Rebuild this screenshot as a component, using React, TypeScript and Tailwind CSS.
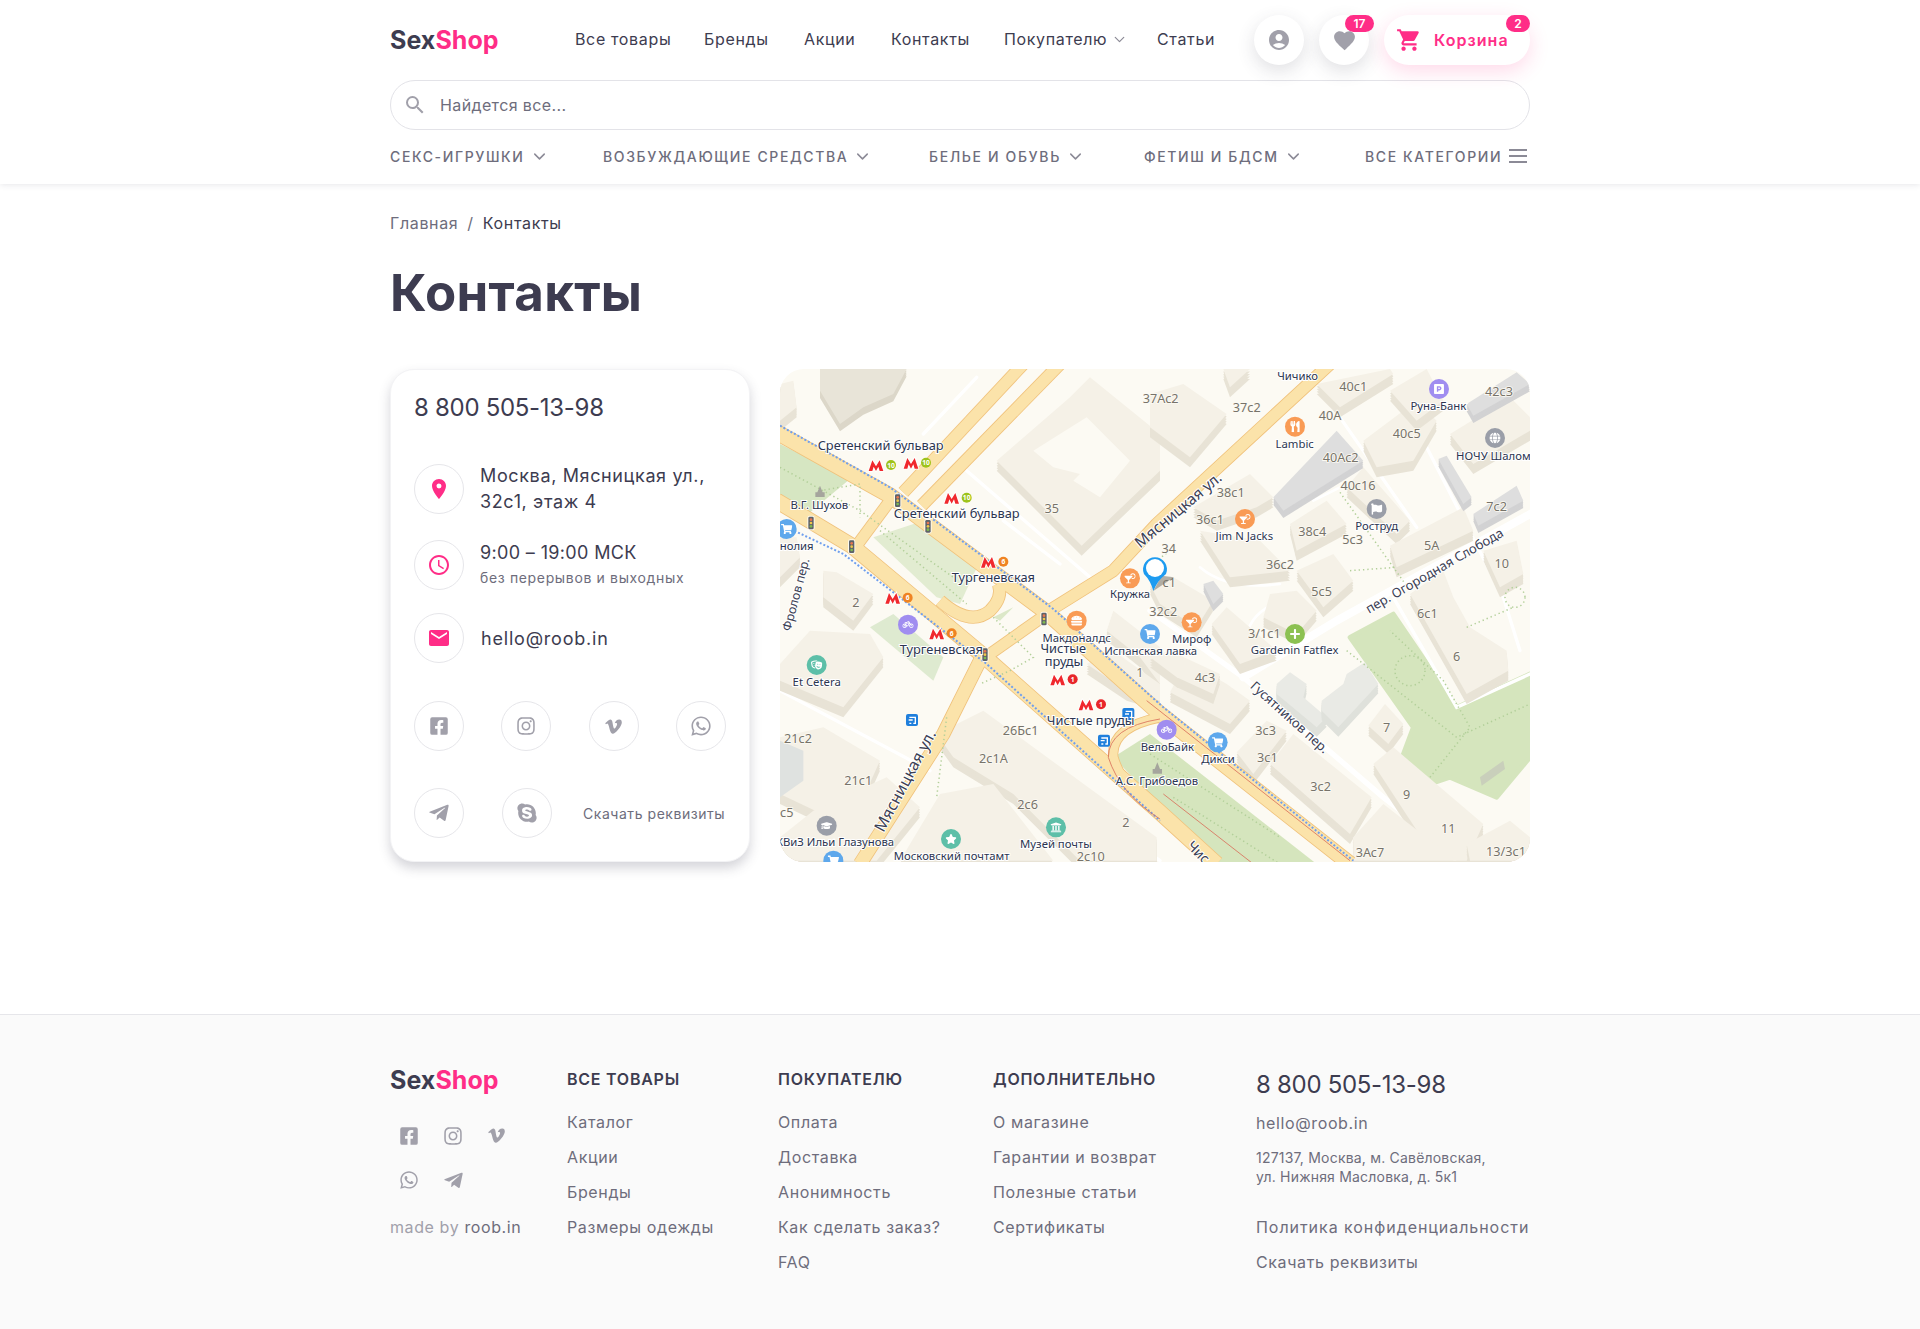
import React from 'react';
import { ChevronDown } from 'lucide-react';
import { MdAccountCircle, MdFavorite, MdShoppingCart, MdSearch, MdPlace, MdAccessTime, MdMail } from 'react-icons/md';
import {
  FaFacebookSquare, FaInstagram, FaVimeoV, FaWhatsapp, FaTelegramPlane, FaSkype,
  FaShoppingCart, FaBicycle, FaTheaterMasks, FaHamburger, FaCocktail, FaGraduationCap, FaStar, FaUniversity, FaUtensils, FaFlag, FaPlus, FaParking, FaGlobe,
} from 'react-icons/fa';

type P = number[];
const pts = (a: P) => { const o: string[] = []; for (let i = 0; i < a.length; i += 2) o.push(a[i] + ',' + a[i + 1]); return o.join(' '); };

function B({ p, h = 30, top = '#f5f1e7', side = '#e8e3d6' }: { p: P; h?: number; top?: string; side?: string }) {
  const steps = [h, h * 0.75, h * 0.5, h * 0.25];
  return (
    <g>
      {steps.map((s) => <polygon key={s} points={pts(p)} fill={side} transform={`translate(0 ${s})`} />)}
      <polygon points={pts(p)} fill={top} />
    </g>
  );
}

const b4: P[] = [
  [650,290,870,100,930,40,1140,210,1140,320,905,545],
  [0,60,40,50,50,130,0,170],
  [130,620,170,625,280,690,220,770,130,700],
  [0,900,90,800,270,810,310,880,190,1030,0,950],
  [0,1120,130,1090,300,1190,210,1390,0,1290],
  [100,1340,320,1240,420,1330,290,1490,0,1490,0,1420],
  [470,1110,610,1040,1130,1420,1130,1490,900,1490,700,1290,520,1180],
  [360,1490,480,1290,640,1260,820,1490],
  [1000,740,1140,850,1140,960,1080,880,980,800],
  [0,520,50,520,60,580,0,640],
  [920,900,1000,860,1140,960,1140,1010,1040,980],
];
const b4top: P[] = [
  [120,15,380,15,340,90,250,130,180,180,120,80],
];
const b5: P[] = [
  [220,15,300,15,240,70],
  [0,90,100,60,230,150,120,280,0,190],
  [500,60,720,15,730,30,570,130],
  [640,230,800,110,860,170,790,290,680,310],
  [720,80,830,15,880,110,800,170],
  [900,210,1080,100,1140,160,1140,200,970,300],
  [590,370,640,310,780,470,740,510],
  [130,430,300,330,370,400,320,430,200,470],
  [150,500,330,530,420,620,240,640],
  [420,480,530,410,590,480,440,560],
  [720,545,940,430,970,500,740,610],
  [1000,560,1100,530,1120,630,1050,670],
  [440,620,550,570,610,650,520,730],
  [360,690,440,680,500,740,440,810,340,760],
  [780,690,880,620,910,700,960,790,1070,860,1075,920,950,990],
  [655,1085,705,1020,760,1080,715,1140],
  [185,780,230,730,380,860,270,900],
  [260,1165,350,1070,410,1100,310,1230],
  [360,1200,430,1110,665,1300,600,1410],
  [670,1200,730,1150,1000,1380,950,1490,860,1490],
  [610,1420,700,1320,920,1490,610,1490],
  [60,985,110,890,230,960,300,1010,240,1080],
  [950,1440,1080,1370,1140,1420,1140,1490,960,1490],
  [0,880,60,860,210,930,190,990,80,940],
  [0,660,70,640,190,710,140,790,30,720],
];
const grey5: P[] = [
  [370,400,560,200,640,290,400,440],
  [950,120,1100,25,1140,60,970,155],
  [970,450,1100,365,1120,410,985,485],
  [865,285,890,275,965,400,940,420],
  [160,660,190,650,220,690,190,720],
];
const pale5: P[] = [
  [380,960,420,925,470,960,460,1000,530,1060,500,1090,380,990],
  [515,1010,580,960,590,930,645,895,685,960,565,1090,515,1040],
];

const stations: [string, number, number][] = [
  ['Сретенский бульвар',302,258],['Сретенский бульвар',530,462],['Тургеневская',640,653],['Тургеневская',484,870],
  ['Чистые',850,868],['пруды',852,905],['Чистые пруды',932,1082],
];
const names4: [string, number, number][] = [
  ['В.Г. Шухов',118,436],['нолия',50,558],['Макдоналдс',890,833],
  ['Испанская лавка',1112,873],['Кружка',1050,703],['Et Cetera',110,965],['КВиЗ Ильи Глазунова',165,1445],
  ['Московский почтамт',515,1488],['Музей почты',828,1452],['ВелоБайк',1162,1160],['А.С. Грибоедов',1131,1262],
];
const nums4: [string, number, number][] = [
  ['2',228,730],['35',815,448],['21с2',54,1136],['21с1',235,1262],['26Бс1',722,1112],['2с1А',640,1198],['2с6',743,1334],
  ['2',1038,1388],['1',1080,940],['с5',20,1358],['2с10',932,1492],['37Ас2',1142,118],
];
const names5: [string, number, number][] = [
  ['Чичико',443,47],['Lambic',434,251],['Руна-Банк',865,137],['НОЧУ Шалом',1030,287],['Jim N Jacks',283,528],['Роструд',680,497],
  ['Мироф',125,838],['Gardenin Fatflex',434,870],['Дикси',204,1197],
];
const nums5: [string, number, number][] = [
  ['40с1',610,80],['40А',540,167],['37с2',290,143],['42с3',1047,95],['40с5',770,222],['40Ас2',572,293],['40с16',624,378],['38с1',242,398],
  ['36с1',180,480],['38с4',487,515],['5с3',608,539],['34',56,566],['7с2',1040,440],['5А',845,557],['10',1055,611],['36с2',390,614],['5с5',515,695],
  ['6с1',832,762],['32с2',40,755],['с1',58,668],['3/1с1',343,822],['6',920,890],['4с3',165,953],['7',710,1103],['3с3',347,1113],['3с1',352,1195],
  ['3с2',512,1282],['9',770,1305],['11',895,1407],['3Ас7',660,1480],['13/3с1',1068,1476],
];
const rot: [string, number, number, number, number][] = [
  ['Мясницкая ул.',390,1258,-62,48],
  ['Мясницкая ул.',1205,450,-40,46],
  ['Фролов пер.',60,695,-75,37],
  ['Гусятников пер.',1520,1070,42,39],
  ['пер. Огородная Слобода',1970,632,-30,39],
  ['Чис',1245,1475,45,42],
];

const orange = '#f99b55', blue = '#5ea8ec', purple = '#a08df0', teal = '#5dbfa8', grey = '#9a9ea8', green = '#8cc152';
const pois: [number, number, string, any][] = [
  [20,495,blue,FaShoppingCart],[384,782,purple,FaBicycle],[110,903,teal,FaTheaterMasks],[890,770,orange,FaHamburger],[1050,643,orange,FaCocktail],
  [1110,810,blue,FaShoppingCart],[140,1385,grey,FaGraduationCap],[513,1425,teal,FaStar],[828,1390,teal,FaUniversity],[160,1490,blue,FaShoppingCart],
  [1545,188,orange,FaUtensils],[1977,75,purple,FaParking],[2145,222,grey,FaGlobe],[1790,435,grey,FaFlag],[1395,465,orange,FaCocktail],
  [1235,775,orange,FaCocktail],[1545,810,green,FaPlus],[1160,1097,purple,FaBicycle],[1313,1135,blue,FaShoppingCart],
];
const metro: [number, number, number][] = [[288,305,10],[393,298,10],[515,403,10],[625,595,6],[338,703,6],[470,810,6],[833,948,1],[918,1023,1]];
const lights: [number, number][] = [[353,410],[93,477],[215,548],[444,487],[792,765],[615,872]];
const transit: [number, number][] = [[396,1068],[972,1130],[1045,1050]];

const yellow: [string, number][] = [
  ['M-10,205 L330,395 L800,745 L1140,1050 L1710,1500', 44],
  ['M-10,410 L215,545 L610,875 L1140,1345 L1310,1500', 44],
  ['M730,0 L370,385', 34],
  ['M840,0 L425,425', 34],
  ['M330,410 L230,545', 32],
  ['M800,750 L630,870', 32],
  ['M600,890 L490,1110 L240,1500', 38],
  ['M800,745 L1000,620 L1130,480 L1650,0', 34],
  ['M480,710 Q570,790 630,740 Q670,700 655,660', 34],
  ['M1140,1060 Q990,1090 1000,1180 Q1030,1280 1140,1350', 26],
];

function MapView() {
  return (
    <svg width="750" height="493" viewBox="0 0 750 493" className="block" fontFamily="'Noto Sans',sans-serif">
      <rect width="750" height="493" fill="#fcfaf3" />
      <g transform="translate(0 -5) scale(0.33333)">
        <polygon points="0,240 210,345 60,470 0,420" fill="#d6e6c2" />
        <polygon points="280,520 430,470 600,590 540,720 470,700" fill="#e2ecd1" />
        <polygon points="270,790 340,750 490,880 460,950" fill="#deead0" />
        <polygon points="1000,1180 1110,1110 1610,1500 1310,1500" fill="#d5e5bd" />
        <polygon points="640,760 700,730 660,770" fill="#dce8c8" />
        <polygon points="1710,820 1840,750 2030,1030 2250,930 2250,1180 2150,1300 2010,1240 1950,1260 1870,1170 1900,1090" fill="#d5e5bd" stroke="#d5e5bd" strokeWidth="14" strokeLinejoin="round" />
        <polygon points="2100,1240 2170,1190 2175,1215 2105,1265" fill="#c9cfbb" />
        <g fill="none" stroke="#ffffff" strokeLinecap="round">
          <path d="M1110,740 L1390,940 L1810,1300 L2070,1500" strokeWidth="16" />
          <path d="M1390,940 L1670,770 L2260,445" strokeWidth="24" />
          <path d="M1680,160 L1910,490 M1940,250 L2170,700 L2220,860 M1840,700 L2030,1030 L2250,930" strokeWidth="10" />
          <path d="M0,980 L450,1220 M560,320 L930,640 M430,210 L590,40 M700,1180 L1140,1490 M30,80 L0,180 M670,470 L840,600" strokeWidth="10" />
          <path d="M1260,610 Q1340,680 1500,660 M1400,830 Q1400,760 1480,720 M1600,410 L1680,370" strokeWidth="8" />
        </g>
        {b4top.map((p, i) => <B key={i} p={p} h={22} top="#e8e4d8" side="#dcd7c9" />)}
        {b4.map((p, i) => <B key={i} p={p} />)}
        <polygon points="760,260 920,160 1050,290 960,400 880,350 900,330 820,310" fill="#fcfaf3" />
        <g transform="translate(1110 0)">
          {b5.map((p, i) => <B key={i} p={p} />)}
          {grey5.map((p, i) => <B key={i} p={p} h={22} top="#dedede" side="#d2d2d3" />)}
          {pale5.map((p, i) => <B key={i} p={p} h={28} top="#e9eae5" side="#dfe1db" />)}
        </g>
        <polygon points="0,1130 0,1300 70,1250 70,1160" fill="#dfe2e0" />
        {yellow.map(([d, w], i) => <path key={i} d={d} fill="none" stroke="#f0c27c" strokeWidth={w + 5} strokeLinejoin="round" />)}
        {yellow.map(([d, w], i) => <path key={i} d={d} fill="none" stroke="#fbe3aa" strokeWidth={w} strokeLinejoin="round" />)}
        <g fill="none" stroke="#b2cf99" strokeWidth="4.5" strokeDasharray="4 9">
          <path d="M0,310 L240,440 L520,640 M300,500 L560,720 M120,380 L240,360 L240,460 M1680,385 L1890,680 M1710,620 L1850,610 M1170,560 L1090,620 M1950,1240 L2070,1090 L1990,950 L1830,800 M1700,860 L2030,1120 L2250,1020 M2060,790 L2200,730" />
          <circle cx="1890" cy="920" r="45" />
          <circle cx="2205" cy="700" r="30" />
          <path d="M1180,1300 L1500,1500 M1110,1170 L1500,1420" />
          <path d="M640,760 L760,880 L690,920 L600,960 M500,1060 L470,1300" />
        </g>
        <g fill="none" stroke="#6f9fee" strokeWidth="6" strokeDasharray="6 6">
          <path d="M0,185 L330,370 L820,735 L1150,1030 L1720,1490" />
          <path d="M0,480 L190,570 L620,900 L1140,1370" />
        </g>
        <path d="M1140,1065 Q985,1090 985,1180 Q1020,1290 1140,1365 M1150,1290 L1420,1500 M1100,1010 L1710,1490" fill="none" stroke="#d9705c" strokeWidth="2.5" />
        {lights.map(([x, y], i) => (
          <g key={i}>
            <rect x={x - 11} y={y - 22} width="22" height="44" rx="7" fill="#fff" opacity=".8" />
            <rect x={x - 8} y={y - 19} width="16" height="38" rx="4" fill="#5f6368" />
            <circle cx={x} cy={y - 10} r="4" fill="#e8764f" />
            <circle cx={x} cy={y} r="4" fill="#f0c64a" />
            <circle cx={x} cy={y + 10} r="4" fill="#7dbb4f" />
          </g>
        ))}
        {transit.map(([x, y], i) => (
          <g key={i}>
            <rect x={x - 18} y={y - 18} width="36" height="36" rx="6" fill="#1f7fdc" />
            <path d={`M${x - 8} ${y - 8} h18 v18 h-6 M${x - 10} ${y} h12 M${x - 8} ${y + 10} h6`} stroke="#fff" strokeWidth="4" fill="none" />
          </g>
        ))}
        <path d="M120,365 l8,20 h6 v14 h-28 v-14 h6z M1132,1195 l8,20 h6 v14 h-28 v-14 h6z" fill="#a5a59d" />
        {metro.map(([x, y, n], i) => (
          <g key={i}>
            <polygon points={`${x - 22},${y + 16} ${x - 11},${y - 16} ${x},${y + 2} ${x + 11},${y - 16} ${x + 22},${y + 16} ${x + 11},${y + 16} ${x + 7},${y + 3} ${x},${y + 16} ${x - 7},${y + 3} ${x - 11},${y + 16}`} fill="#f0282d" stroke="#fff" strokeWidth="5" paintOrder="stroke" />
            <circle cx={x + 45} cy={y - 2} r="15" fill={n === 10 ? '#9ec31c' : n === 6 ? '#ef8322' : '#e8262a'} />
            <text x={x + 45} y={y + 6} textAnchor="middle" fontSize="20" fontWeight="700" fill="#fff">{n}</text>
          </g>
        ))}
        {pois.map(([x, y, c, I], i) => (
          <g key={i}>
            <circle cx={x} cy={y} r="30" fill={c} />
            <I x={x - 17} y={y - 17} size={34} color="#fff" />
          </g>
        ))}
        <g fontSize="38" textAnchor="middle" fill="#77736a" stroke="#fcfaf3" strokeWidth="5" paintOrder="stroke">
          {nums4.map(([t, x, y], i) => <text key={i} x={x} y={y}>{t}</text>)}
          {nums5.map(([t, x, y], i) => <text key={i} x={x + 1110} y={y}>{t}</text>)}
        </g>
        <g fontSize="34" textAnchor="middle" fill="#2c3550" stroke="#ffffff" strokeWidth="6" paintOrder="stroke">
          {names4.map(([t, x, y], i) => <text key={i} x={x} y={y}>{t}</text>)}
          {names5.map(([t, x, y], i) => <text key={i} x={x + 1110} y={y}>{t}</text>)}
          {stations.map(([t, x, y], i) => <text key={i} x={x} y={y} fontSize="38.5">{t}</text>)}
          {rot.map(([t, x, y, r, s], i) => <text key={i} x={x} y={y} fontSize={s} fill="#3b4054" transform={`rotate(${r} ${x} ${y})`}>{t}</text>)}
        </g>
        <polygon points="1120,681 1182,640 1145,635" fill="#77736a" opacity=".55" />
        <path d="M1092,630 A36,36 0 1 1 1158,630 Q1132,650 1120,681 Q1112,650 1092,630 Z" fill="#1d9bf0" />
        <circle cx="1125" cy="612" r="27" fill="#fff" />
      </g>
    </svg>
  );
}

const ink = 'text-[#3d3c50]';

function Logo() {
  return <div className="text-[25px] leading-[30px] font-bold tracking-[0.05px] text-[#3d3c50]">Sex<span className="text-[#ff2d87]">Shop</span></div>;
}
function Ring({ children }: { children: React.ReactNode }) {
  return <div className="w-[50px] h-[50px] shrink-0 rounded-full border border-[#e6e6ea] bg-white flex items-center justify-center">{children}</div>;
}
function Badge({ children, cls }: { children: React.ReactNode; cls: string }) {
  return <span className={`absolute top-0 h-[17px] rounded-full bg-[#ff2d87] text-white text-[12px] leading-[17px] font-semibold text-center ${cls}`}>{children}</span>;
}
function Nav({ children, w }: { children: React.ReactNode; w: string }) {
  return <a className={`text-[16px] leading-6 text-[#3d3c50] whitespace-nowrap tracking-[0.65px] flex items-center ${w}`}>{children}</a>;
}
function Cat({ t, w }: { t: string; w: string }) {
  return (
    <div className={`flex items-center gap-[5px] text-[14px] font-medium tracking-[1.62px] text-[#6e6d7c] uppercase whitespace-nowrap ${w}`}>
      {t}<ChevronDown size={19} strokeWidth={1.9} className="text-[#8b8a96]" />
    </div>
  );
}
function Col({ title, items, w }: { title: string; items: string[]; w: string }) {
  return (
    <div className={w}>
      <div className="text-[16px] leading-6 font-semibold text-[#3d3c50] uppercase tracking-[0.75px] whitespace-nowrap">{title}</div>
      <div className="mt-[19px] flex flex-col gap-[11px]">
        {items.map((t) => <div key={t} className="text-[16px] leading-6 text-[#6e6d7c] tracking-[0.62px] whitespace-nowrap">{t}</div>)}
      </div>
    </div>
  );
}

export default function App() {
  const grayIcon = 'text-[#a1a0aa]';
  return (
    <div className="min-h-[1329px] bg-white flex flex-col [font-family:Inter,sans-serif]">
      <header className="h-[184px] bg-white shadow-[0_1px_6px_rgba(60,60,80,0.12)]">
        <div className="w-[1140px] mx-auto">
          <div className="h-[80px] flex items-center relative">
            <div className="w-[185px]"><Logo /></div>
            <nav className="flex items-center -mt-[2px]">
              <Nav w="w-[129px]">Все товары</Nav>
              <Nav w="w-[100px]">Бренды</Nav>
              <Nav w="w-[87px]">Акции</Nav>
              <Nav w="w-[113px]">Контакты</Nav>
              <Nav w="w-[153px]">Покупателю<ChevronDown size={17} strokeWidth={1.7} className="ml-[4px] text-[#8b8a96]" /></Nav>
              <Nav w="w-[97px]">Статьи</Nav>
            </nav>
            <div className="flex items-center gap-[15px]">
              <button className="w-[50px] h-[50px] rounded-full bg-white shadow-[0_6px_18px_rgba(60,60,80,0.16)] flex items-center justify-center"><MdAccountCircle size={24} className={grayIcon} /></button>
              <button className="relative w-[50px] h-[50px] rounded-full bg-white shadow-[0_6px_18px_rgba(60,60,80,0.16)] flex items-center justify-center">
                <MdFavorite size={25} className={grayIcon} />
                <Badge cls="left-[26px] w-[29px]">17</Badge>
              </button>
              <button className="relative w-[146px] h-[50px] rounded-full bg-white shadow-[0_6px_20px_rgba(255,45,135,0.18)] flex items-center pl-[12px]">
                <MdShoppingCart size={26} className="text-[#ff2d87]" />
                <span className="ml-[12px] -mt-[1px] text-[16px] font-semibold text-[#ff2d87] tracking-[1.05px]">Корзина</span>
                <Badge cls="right-0 w-[24px]">2</Badge>
              </button>
            </div>
          </div>
          <div className="h-[50px] rounded-full border border-[#e3e3e8] flex items-center pl-[12px]">
            <MdSearch size={24} className="text-[#a1a0aa]" />
            <span className="ml-[13px] -mt-[1px] text-[16px] text-[#6e6d7c] tracking-[0.38px]">Найдется все...</span>
          </div>
          <div className="h-[54px] -mt-[1px] flex items-center">
            <Cat t="Секс-игрушки" w="w-[213px]" />
            <Cat t="Возбуждающие средства" w="w-[326px]" />
            <Cat t="Белье и обувь" w="w-[215px]" />
            <Cat t="Фетиш и БДСМ" w="w-[221px]" />
            <div className="flex-1 flex items-center justify-between text-[14px] font-medium tracking-[1.62px] text-[#6e6d7c] uppercase whitespace-nowrap">
              Все категории
              <span className="flex flex-col gap-[4px] w-[18px] mr-[3px]"><i className="h-[2px] bg-[#8b8a96]" /><i className="h-[2px] bg-[#8b8a96]" /><i className="h-[2px] bg-[#8b8a96]" /></span>
            </div>
          </div>
        </div>
      </header>

      <main className="w-[1140px] mx-auto h-[830px] pt-[27px]">
        <div className="text-[16px] leading-6 tracking-[0.65px]"><span className="text-[#6e6d7c]">Главная</span><span className="text-[#6e6d7c] mx-[9px]">/</span><span className={ink}>Контакты</span></div>
        <h1 className="mt-[28px] text-[51px] leading-[60px] font-bold tracking-[0.3px] text-[#3d3c50]">Контакты</h1>
        <div className="mt-[46px] flex gap-[30px]">
          <div className="w-[360px] h-[493px] rounded-[24px] bg-white border border-[#f3f3f5] shadow-[0_6px_12px_rgba(60,60,80,0.22)] pl-[23px] pr-[23px] pt-[20px]">
            <div className="text-[24px] leading-[36px] text-[#3d3c50] tracking-[-0.3px]">8 800 505-13-98</div>
            <div className="mt-[37px] flex items-center gap-[16px]">
              <Ring><MdPlace size={24} className="text-[#ff2d87]" /></Ring>
              <div className="text-[18px] leading-[26px] text-[#3d3c50] tracking-[0.63px]">Москва, Мясницкая ул.,<br />32с1, этаж 4</div>
            </div>
            <div className="mt-[25px] flex items-center gap-[16px]">
              <Ring><MdAccessTime size={24} className="text-[#ff2d87]" /></Ring>
              <div>
                <div className="text-[18px] leading-[26px] text-[#3d3c50] tracking-[0.35px]">9:00 – 19:00 МСК</div>
                <div className="text-[14px] leading-[24px] text-[#6e6d7c] tracking-[0.65px]">без перерывов и выходных</div>
              </div>
            </div>
            <div className="mt-[23px] flex items-center gap-[17px]">
              <Ring><MdMail size={24} className="text-[#ff2d87]" /></Ring>
              <div className="text-[18px] text-[#3d3c50] tracking-[0.8px]">hello@roob.in</div>
            </div>
            <div className="mt-[38px] flex justify-between w-[312px]">
              <Ring><FaFacebookSquare size={20} className={grayIcon} /></Ring>
              <Ring><FaInstagram size={20} className={grayIcon} /></Ring>
              <Ring><FaVimeoV size={19} className={grayIcon} /></Ring>
              <Ring><FaWhatsapp size={22} className={grayIcon} /></Ring>
            </div>
            <div className="mt-[37px] flex items-center">
              <Ring><FaTelegramPlane size={22} className={grayIcon} /></Ring>
              <div className="ml-[38px]"><Ring><FaSkype size={22} className={grayIcon} /></Ring></div>
              <div className="ml-[31px] text-[14px] text-[#6e6d7c] tracking-[0.55px] whitespace-nowrap">Скачать реквизиты</div>
            </div>
          </div>
          <div className="w-[750px] h-[493px] rounded-[24px] overflow-hidden"><MapView /></div>
        </div>
      </main>

      <footer className="flex-1 bg-[#fafafa] border-t border-[#e6e6ea]">
        <div className="w-[1140px] mx-auto pt-[52px] flex">
          <div className="w-[177px]">
            <div className="-mt-[2px]"><Logo /></div>
            <div className="mt-[31px] pl-[9px] grid grid-cols-3 w-[141px] gap-y-[24px] text-[#a1a0aa]">
              <FaFacebookSquare size={20} />
              <FaInstagram size={20} />
              <FaVimeoV size={19} />
              <FaWhatsapp size={20} />
              <FaTelegramPlane size={21} />
            </div>
            <div className="mt-[24px] text-[16px] leading-6 tracking-[0.6px] text-[#a1a0aa] whitespace-nowrap">made by <span className="text-[#6e6d7c]">roob.in</span></div>
          </div>
          <Col w="w-[211px]" title="Все товары" items={['Каталог', 'Акции', 'Бренды', 'Размеры одежды']} />
          <Col w="w-[215px]" title="Покупателю" items={['Оплата', 'Доставка', 'Анонимность', 'Как сделать заказ?', 'FAQ']} />
          <Col w="w-[263px]" title="Дополнительно" items={['О магазине', 'Гарантии и возврат', 'Полезные статьи', 'Сертификаты']} />
          <div className="flex-1">
            <div className="text-[24px] leading-[36px] text-[#3d3c50] tracking-[-0.3px] whitespace-nowrap">8 800 505-13-98</div>
            <div className="mt-[8px] text-[16px] leading-6 text-[#6e6d7c] tracking-[0.62px]">hello@roob.in</div>
            <div className="mt-[13px] text-[14px] leading-[19px] text-[#6e6d7c] tracking-[0.2px] whitespace-nowrap">127137, Москва, м. Савёловская,<br />ул. Нижняя Масловка, д. 5к1</div>
            <div className="mt-[29px] text-[16px] leading-6 text-[#6e6d7c] tracking-[0.95px] whitespace-nowrap">Политика конфиденциальности</div>
            <div className="mt-[11px] text-[16px] leading-6 text-[#6e6d7c] tracking-[0.62px] whitespace-nowrap">Скачать реквизиты</div>
          </div>
        </div>
      </footer>
    </div>
  );
}
